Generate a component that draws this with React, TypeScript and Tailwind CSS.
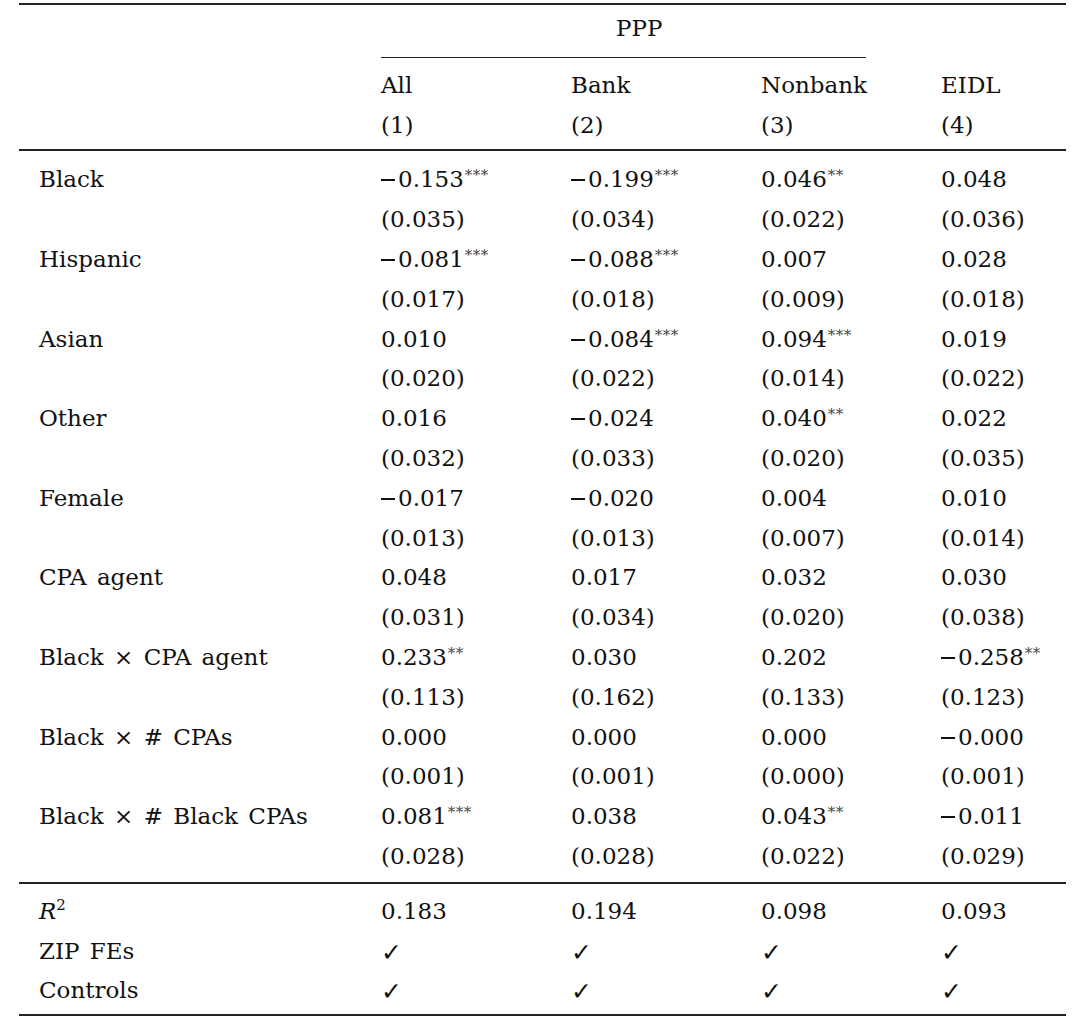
import React from "react";

type Row = { label: string; coefs: string[]; ses: string[] };

const rows: Row[] = [
  { label: "Black", coefs: ["-0.153***", "-0.199***", "0.046**", "0.048"], ses: ["(0.035)", "(0.034)", "(0.022)", "(0.036)"] },
  { label: "Hispanic", coefs: ["-0.081***", "-0.088***", "0.007", "0.028"], ses: ["(0.017)", "(0.018)", "(0.009)", "(0.018)"] },
  { label: "Asian", coefs: ["0.010", "-0.084***", "0.094***", "0.019"], ses: ["(0.020)", "(0.022)", "(0.014)", "(0.022)"] },
  { label: "Other", coefs: ["0.016", "-0.024", "0.040**", "0.022"], ses: ["(0.032)", "(0.033)", "(0.020)", "(0.035)"] },
  { label: "Female", coefs: ["-0.017", "-0.020", "0.004", "0.010"], ses: ["(0.013)", "(0.013)", "(0.007)", "(0.014)"] },
  { label: "CPA agent", coefs: ["0.048", "0.017", "0.032", "0.030"], ses: ["(0.031)", "(0.034)", "(0.020)", "(0.038)"] },
  { label: "Black × CPA agent", coefs: ["0.233**", "0.030", "0.202", "-0.258**"], ses: ["(0.113)", "(0.162)", "(0.133)", "(0.123)"] },
  { label: "Black × # CPAs", coefs: ["0.000", "0.000", "0.000", "-0.000"], ses: ["(0.001)", "(0.001)", "(0.000)", "(0.001)"] },
  { label: "Black × # Black CPAs", coefs: ["0.081***", "0.038", "0.043**", "-0.011"], ses: ["(0.028)", "(0.028)", "(0.022)", "(0.029)"] },
];

function Val({ v }: { v: string }) {
  const neg = v.startsWith("-");
  const body = v.replace(/^-/, "").replace(/\*+$/, "");
  const stars = (v.match(/\*+$/) || [""])[0];
  return (
    <span className="whitespace-nowrap">
      {neg && (
        <span className="inline-block w-[17px] overflow-visible">
          <span className="inline-block w-[14px] h-[2px] bg-[#111] align-middle relative top-[-1px]" />
        </span>
      )}
      {body}
      {stars && (
        <span className="relative top-[-7px] ml-[1px] text-[15px] text-[#444] tracking-[0.5px]">{stars}</span>
      )}
    </span>
  );
}

const grid = "grid grid-cols-[362px_190px_190px_180px_1fr] h-[39.8px] leading-[39.8px]";

function Check() {
  return <span className="font-['DejaVu_Sans',sans-serif] font-bold text-[25px] relative top-[1px]">✓</span>;
}

export default function App() {
  return (
    <div className="w-[1080px] h-[1018px] bg-white overflow-hidden">
      <div className="ml-[19px] w-[1047px] pt-[3px] text-[23px] text-[#111] font-['DejaVu_Serif',serif] [word-spacing:4px]">
        <div className="h-[2px] bg-[#222]" />
        <div className="h-[4px]" />
        {/* PPP header */}
        <div className={grid}>
          <div />
          <div className="col-span-3 pl-[235px]">PPP</div>
        </div>
        <div className="h-[8px]" />
        <div className="grid grid-cols-[362px_485px_1fr]">
          <div />
          <div className="h-[1.5px] bg-[#222]" />
        </div>
        <div className="h-[7.5px]" />
        <div className={grid}>
          <div />
          <div>All</div>
          <div>Bank</div>
          <div>Nonbank</div>
          <div>EIDL</div>
        </div>
        <div className={grid}>
          <div />
          <div>(1)</div>
          <div>(2)</div>
          <div>(3)</div>
          <div>(4)</div>
        </div>
        <div className="h-[4px]" />
        <div className="h-[2px] bg-[#222]" />
        <div className="h-[9px]" />
        {rows.map((r) => (
          <React.Fragment key={r.label}>
            <div className={grid}>
              <div className="pl-[20px] [word-spacing:3px]">{r.label}</div>
              {r.coefs.map((c, i) => (
                <div key={i}>
                  <Val v={c} />
                </div>
              ))}
            </div>
            <div className={grid}>
              <div />
              {r.ses.map((s, i) => (
                <div key={i}>{s}</div>
              ))}
            </div>
          </React.Fragment>
        ))}
        <div className="h-[5px]" />
        <div className="h-[2px] bg-[#222]" />
        <div className="h-[8px]" />
        <div className={grid}>
          <div className="pl-[20px]">
            <span className="italic">R</span>
            <span className="relative top-[-9px] text-[15px]">2</span>
          </div>
          <div>0.183</div>
          <div>0.194</div>
          <div>0.098</div>
          <div>0.093</div>
        </div>
        <div className={grid}>
          <div className="pl-[20px] [word-spacing:3px]">ZIP FEs</div>
          <div><Check /></div>
          <div><Check /></div>
          <div><Check /></div>
          <div><Check /></div>
        </div>
        <div className={grid}>
          <div className="pl-[20px]">Controls</div>
          <div><Check /></div>
          <div><Check /></div>
          <div><Check /></div>
          <div><Check /></div>
        </div>
        <div className="h-[3px]" />
        <div className="h-[2px] bg-[#222]" />
      </div>
    </div>
  );
}
